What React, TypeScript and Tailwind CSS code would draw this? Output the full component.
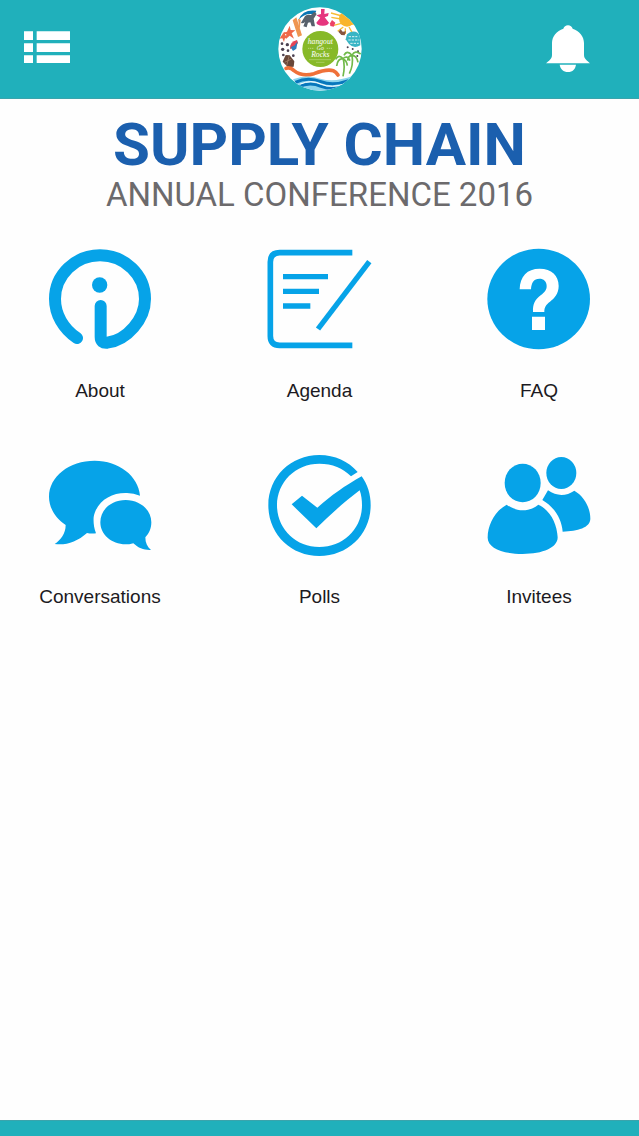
import React from 'react';

function AboutIcon() {
  return (
    <svg viewBox="51 36 318 318" className="w-full" fill="none" aria-hidden="true">
      <path
        d="M141 309C100 282 75 238 75 192A135 131 0 0 1 345 192C345 252 292 315 232 323Q212 325 212 306V213"
        stroke="#06a3e8"
        strokeWidth="36"
        strokeLinecap="round"
        strokeLinejoin="round"
      />
      <circle cx="209" cy="150" r="23" fill="#06a3e8" />
    </svg>
  );
}

function AgendaIcon() {
  return (
    <svg viewBox="50 36 318 318" className="w-full" fill="none" stroke="#06a3e8" aria-hidden="true">
      <path d="M306 53H88Q60 53 60 81V303Q60 331 88 331H306" strokeWidth="17" />
      <path d="M98 125H233M98 169H206M98 213H180" strokeWidth="16" />
      <path d="M357 80L203 282" strokeWidth="16" />
    </svg>
  );
}

function FaqIcon() {
  return (
    <svg viewBox="48 36 318 318" className="w-full" aria-hidden="true">
      <ellipse cx="206" cy="192" rx="154" ry="151" fill="#06a3e8" />
      <path
        d="M149 163C150 124 171 101 209 101C245 101 266 122 266 153C266 177 253 190 240 200C228 209 223 216 223 231H189C188 207 194 196 212 181C224 171 230 165 230 153C230 139 221 131 208 131C192 131 184 143 183 163ZM186 245H225V285H186Z"
        fill="#fff"
      />
    </svg>
  );
}

function ConversationsIcon() {
  return (
    <svg viewBox="51 39 318 318" className="w-full" fill="#06a3e8" aria-hidden="true">
      <path d="M330 167C325 108 267 62 194 62C118 62 57 109 57 170C57 204 77 235 107 255C107 281 92 300 74 312C107 317 142 305 171 279Q184 282 198 280C191 262 190 245 191 231C200 183 244 157 291 159Q311 160 330 167Z" />
      <path d="M287 180C329 180 364 209 364 247C364 266 357 281 346 292C346 309 352 321 363 330C342 331 326 325 310 310C302 313 293 313 287 313C244 313 211 283 211 247C211 209 244 180 287 180Z" />
    </svg>
  );
}

function PollsIcon() {
  return (
    <svg viewBox="50 39 318 318" className="w-full" fill="#06a3e8" aria-hidden="true">
      <path d="M322 96C294 64 254 45 207 45C121 45 54 111 54 196C54 282 121 348 207 348C293 348 361 282 361 196C361 164 352 134 334 109C284 137 242 167 201 203L155 167L124 193L198 265C239 224 283 185 328 151C333 165 335 179 335 196C335 266 279 321 207 321C136 321 80 266 80 196C80 126 136 71 207 71C246 71 278 84 302 109Z" />
    </svg>
  );
}

function InviteesIcon() {
  return (
    <svg viewBox="48 39 318 318" className="w-full" fill="#06a3e8" aria-hidden="true">
      <ellipse cx="158" cy="129" rx="54" ry="58" />
      <path d="M110 194C76 212 53 253 53 293C53 324 99 342 158 342C219 342 263 323 263 292C261 250 240 210 205 194C177 217 139 216 110 194Z" />
      <ellipse cx="274" cy="99" rx="45" ry="48" />
      <path d="M234 151C260 169 288 169 313 152C342 168 361 203 361 236C361 263 323 273 278 275C275 236 253 201 217 180Z" />
    </svg>
  );
}

function EventLogo() {
  return (
    <svg viewBox="22 22 252 252" className="size-21" aria-label="Event logo" role="img">
      <defs>
        <clipPath id="badge">
          <circle cx="148" cy="148" r="125" />
        </clipPath>
      </defs>
      <circle cx="148" cy="148" r="125" fill="#fff" />
      <g clipPath="url(#badge)">
        {/* sun */}
        <g stroke="#f8bd35" strokeWidth="4">
          <path d="M182 53L211 58M189 77L212 71M201 95L218 82M224 103V86M244 98L235 82M262 78L242 72M181 40L214 49" />
        </g>
        <circle cx="229" cy="57" r="24" fill="#f9b52b" />
        {/* elephant under a blue leaf */}
        <path d="M84 60Q96 28 137 33L132 45Q104 38 84 60Z" fill="#0875b5" />
        <path d="M101 53Q105 42 121 46L131 36L138 43L129 57L133 80H123L119 68L112 69L108 83L98 80L103 67Q96 73 91 69Z" fill="#58616c" />
        {/* dancer */}
        <path d="M151 28H162L161 43L174 40L172 49L162 53L175 69Q171 79 155 78Q139 77 137 69L149 54L137 47L151 43Z" fill="#e6357e" />
        <path d="M178 71L184 61L194 69L189 81L179 79Z" fill="#ec4267" />
        {/* cinnamon, star fish and bird */}
        <path d="M66 62L77 53L94 107L82 112ZM82 57L90 60L87 91Z" fill="#ef9550" />
        <path d="M57 78L60 91L74 92L63 101L70 117L57 108L45 119L47 104L34 100L49 96ZM41 96L44 107L54 112L43 115L40 127L35 116L26 117L32 108Z" fill="#ef6848" />
        <path d="M58 148Q57 126 79 121L82 130Q72 146 58 148Z" fill="#e74457" />
        <path d="M60 143L72 137L81 125L77 147L67 154Z" fill="#327cbb" />
        <g fill="#4b4050">
          <circle cx="34" cy="132" r="4" />
          <circle cx="50" cy="135" r="5" />
          <circle cx="36" cy="149" r="5" />
          <circle cx="52" cy="153" r="4" />
          <circle cx="38" cy="166" r="4" />
          <circle cx="68" cy="168" r="4" />
        </g>
        <path d="M36 186L45 166L57 167L71 185L69 201L52 203Z" fill="#684638" />
        <path d="M42 188L62 178M48 198L55 170" stroke="#b28b70" strokeWidth="2" />
        {/* butterfly and stamp */}
        <path d="M203 96L210 89L216 96L226 95L222 107L212 106Z" fill="#885641" />
        <path d="M238 98Q259 90 269 110V137Q249 148 235 133L225 119L229 104Z" fill="#39b5c5" />
        <path d="M234 111H260M233 121H266M239 131H264" stroke="#d9f2f3" strokeWidth="3" strokeDasharray="7 3" />
        <g fill="#4b4050">
          <circle cx="231" cy="143" r="3" />
          <circle cx="246" cy="148" r="3" />
          <circle cx="262" cy="155" r="3" />
          <circle cx="260" cy="169" r="3" />
        </g>
        {/* palms */}
        <g fill="none" stroke="#71b94a" strokeWidth="5">
          <path d="M217 230Q224 200 217 175M236 222Q249 196 244 166M217 177Q204 162 195 179M217 177Q201 176 198 199M217 177Q230 165 238 183M217 177Q228 182 230 198M244 167Q229 149 220 167M244 167Q232 168 231 183M244 167Q253 150 270 163M244 167Q258 167 262 188" />
        </g>
        {/* boat and sea */}
        <path
          d="M46 206Q58 201 70 213Q94 232 130 222Q168 207 188 213Q196 216 202 226"
          fill="none"
          stroke="#ef7139"
          strokeWidth="11"
          strokeLinecap="round"
        />
        <path d="M67 239Q107 223 149 237Q192 249 246 229L220 273H94Z" fill="#8cd5ed" />
        <path d="M74 248Q111 230 151 246Q187 260 234 243M84 261Q118 245 151 260Q181 272 217 260" fill="none" stroke="#0877bc" strokeWidth="9" />
        <path d="M87 254Q122 238 152 254Q183 267 225 252" fill="none" stroke="#fff" strokeWidth="3" />
      </g>
      <circle cx="149" cy="148" r="54" fill="#87b928" />
      <g fill="#fff" textAnchor="middle" fontFamily="'Liberation Serif', serif" fontStyle="italic">
        <text x="149" y="132" fontSize="23">hangout</text>
        <text x="149" y="150" fontSize="17">Go</text>
        <text x="149" y="171" fontSize="23">Rocks</text>
      </g>
      <path d="M112 146H130M168 146H186M116 180H181M137 188H162" stroke="#d1e5a5" strokeWidth="2" strokeDasharray="4 2" />
    </svg>
  );
}

const items = [
  { label: 'About', icon: AboutIcon },
  { label: 'Agenda', icon: AgendaIcon },
  { label: 'FAQ', icon: FaqIcon },
  { label: 'Conversations', icon: ConversationsIcon },
  { label: 'Polls', icon: PollsIcon },
  { label: 'Invitees', icon: InviteesIcon },
];

export default function App() {
  return (
    <div className="flex min-h-screen flex-col bg-[#fefefe] font-['Liberation_Sans',sans-serif]">
      <header className="grid h-[99px] grid-cols-3 items-center border-b border-[#3aa4ac] bg-[#20b0bb] px-6">
        <button type="button" aria-label="Menu" className="w-[46px] justify-self-start pb-1">
          <svg viewBox="70 90 138 98" className="w-full" fill="#fff" aria-hidden="true">
            <path d="M70 91H97V117H70ZM108 91H208V117H108ZM70 127H97V153H70ZM108 127H208V153H108ZM70 163H97V188H70ZM108 163H208V188H108Z" />
          </svg>
        </button>
        <div className="justify-self-center">
          <EventLogo />
        </div>
        <button type="button" aria-label="Notifications" className="mr-6 w-[46px] justify-self-end">
          <svg viewBox="75 76 138 144" className="w-full" fill="#fff" aria-hidden="true">
            <path d="M144 77C151 77 156 81 158 87C178 93 192 110 192 130V166C192 178 203 184 210 191H78C86 184 96 178 96 166V130C96 110 110 94 130 87C132 81 137 77 144 77Z" />
            <path d="M119 195H168C166 208 158 217 144 217C130 217 121 208 119 195Z" />
          </svg>
        </button>
      </header>

      <main className="flex-1">
        <h1 className="pt-3 text-center font-['Roboto',sans-serif] whitespace-nowrap">
          <span className="block text-[60px] leading-[68px] font-bold text-[#1b5fae]">SUPPLY CHAIN</span>
          <span className="block text-[33px] leading-8 text-[#6c6a6c]">ANNUAL CONFERENCE 2016</span>
        </h1>

        <nav className="mt-9 grid grid-cols-[repeat(3,128px)] justify-between gap-y-11 px-9">
          {items.map(({ label, icon: Icon }) => (
            <a key={label} href="#" className="flex flex-col items-center gap-5">
              <span className="block size-[106px]">
                <Icon />
              </span>
              <span className="text-[19px] leading-9 whitespace-nowrap text-[#1c1a22]">{label}</span>
            </a>
          ))}
        </nav>
      </main>

      <footer className="h-4 border-t border-[#3aa4ac] bg-[#20b0bb]" />
    </div>
  );
}
